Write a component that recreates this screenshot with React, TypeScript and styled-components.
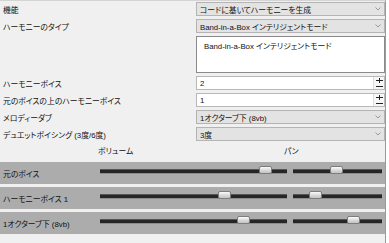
import React from "react";
import styled, { createGlobalStyle } from "styled-components";

const Global = createGlobalStyle`
  html, body { margin: 0; padding: 0; background: #ffffff; }
  body { font-family: "Liberation Sans", "Noto Sans CJK JP", sans-serif; }
`;

const Panel = styled.div`
  width: 386px;
  height: 243px;
  box-sizing: border-box;
  background: #f0f0f0;
  border-top: 1px solid #d4d4d4;
  border-right: 1px solid #9a9a9a;
  font-family: "Liberation Sans", "Noto Sans CJK JP", sans-serif;
  font-size: 7.8px;
  font-feature-settings: "palt";
  color: #111;
  display: flex;
  flex-direction: column;
`;

const Form = styled.div`
  display: grid;
  grid-template-columns: 196px 1fr;
  grid-template-rows: 14px 14px 37px 14px 14px 14px 14px;
  row-gap: 3px;
  padding-top: 1px;
`;

const Label = styled.div`
  padding-left: 3px;
  display: flex;
  align-items: center;
  white-space: nowrap;
`;

const SelectBox = styled.div`
  box-sizing: border-box;
  height: 14px;
  background: #e3e3e3;
  border: 1px solid #b4b4b4;
  display: flex;
  align-items: center;
  padding-left: 3px;
  padding-right: 3px;
`;

const SelectText = styled.span`
  flex: 1;
  white-space: nowrap;
`;

const TextArea = styled.div`
  box-sizing: border-box;
  background: #ffffff;
  border: 1px solid #8a8a8a;
  padding: 3px 0 0 7px;
  white-space: nowrap;
`;

const SpinBox = styled.div`
  box-sizing: border-box;
  height: 14px;
  background: #ffffff;
  border: 1px solid #b8b8b8;
  display: flex;
  align-items: stretch;
`;

const SpinValue = styled.span`
  flex: 1;
  display: flex;
  align-items: center;
  padding-left: 3px;
`;

const SpinButtons = styled.div`
  width: 10px;
  display: flex;
  flex-direction: column;
  border-left: 1px solid #dcdcdc;
  background: #f7f7f7;
`;

const SpinBtn = styled.div`
  flex: 1;
  display: flex;
  align-items: center;
  justify-content: center;
`;

const MixHeader = styled.div`
  display: grid;
  grid-template-columns: 98px 186px 1fr;
  height: 14px;
  margin-top: 2px;
  align-items: center;
`;

const HeaderText = styled.span<{ $col: number }>`
  grid-column: ${(p) => p.$col};
`;

const MixList = styled.div`
  display: flex;
  flex-direction: column;
  gap: 3px;
  margin-top: 5px;
`;

const MixRow = styled.div`
  display: grid;
  grid-template-columns: 97px 193px 1fr;
  height: 22px;
  background: #acacac;
  align-items: center;
`;

const MixLabel = styled.span`
  padding-left: 3px;
  white-space: nowrap;
  color: #111;
`;

const SliderWrap = styled.div`
  position: relative;
  height: 22px;
  padding: 0 3px 4px 3px;
  box-sizing: border-box;
  display: flex;
  align-items: center;
`;

const Track = styled.div`
  position: relative;
  flex: 1;
  height: 3px;
  background: #262626;
  border-top: 1px solid #555;
  border-bottom: 1px solid #8c8c8c;
  box-sizing: content-box;
`;

const Thumb = styled.div`
  position: absolute;
  top: 50%;
  width: 13px;
  height: 8px;
  margin-left: -7px;
  margin-top: -5px;
  box-sizing: border-box;
  border: 1px solid #7d7d7d;
  border-radius: 2px;
  background: linear-gradient(#fbfbfb, #d6d6d6 60%, #c4c4c4);
`;

const Chevron = () => (
  <svg width="6" height="4" viewBox="0 0 6 4">
    <polyline points="0.5,0.5 3,3 5.5,0.5" fill="none" stroke="#9a9a9a" strokeWidth="1" />
  </svg>
);

const Select = ({ text }: { text: string }) => (
  <SelectBox>
    <SelectText>{text}</SelectText>
    <Chevron />
  </SelectBox>
);

const Spin = ({ value }: { value: string }) => (
  <SpinBox>
    <SpinValue>{value}</SpinValue>
    <SpinButtons>
      <SpinBtn>
        <svg width="7" height="5" viewBox="0 0 7 5">
          <path d="M0 2.5H7M3.5 0V5" stroke="#222" strokeWidth="1" />
        </svg>
      </SpinBtn>
      <SpinBtn>
        <svg width="7" height="3" viewBox="0 0 7 3">
          <path d="M0 1.5H7" stroke="#222" strokeWidth="1" />
        </svg>
      </SpinBtn>
    </SpinButtons>
  </SpinBox>
);

const Slider = ({ pos }: { pos: number }) => (
  <SliderWrap>
    <Track>
      <Thumb style={{ left: `${pos}%` }} />
    </Track>
  </SliderWrap>
);

const mixRows = [
  { name: "元のボイス", vol: 89, pan: 49 },
  { name: "ハーモニーボイス 1", vol: 67, pan: 26 },
  { name: "1オクターブ下 (8vb)", vol: 77, pan: 68 },
];

export default function App() {
  return (
    <>
      <Global />
      <Panel>
        <Form>
          <Label>機能</Label>
          <Select text="コードに基いてハーモニーを生成" />
          <Label>ハーモニーのタイプ</Label>
          <Select text="Band-in-a-Box インテリジェントモード" />
          <Label />
          <TextArea>Band-in-a-Box インテリジェントモード</TextArea>
          <Label>ハーモニーボイス</Label>
          <Spin value="2" />
          <Label>元のボイスの上のハーモニーボイス</Label>
          <Spin value="1" />
          <Label>メロディーダブ</Label>
          <Select text="1オクターブ下 (8vb)" />
          <Label>デュエットボイシング (3度/6度)</Label>
          <Select text="3度" />
        </Form>
        <MixHeader>
          <HeaderText $col={2}>ボリューム</HeaderText>
          <HeaderText $col={3}>パン</HeaderText>
        </MixHeader>
        <MixList>
          {mixRows.map((r) => (
            <MixRow key={r.name}>
              <MixLabel>{r.name}</MixLabel>
              <Slider pos={r.vol} />
              <Slider pos={r.pan} />
            </MixRow>
          ))}
        </MixList>
      </Panel>
    </>
  );
}
